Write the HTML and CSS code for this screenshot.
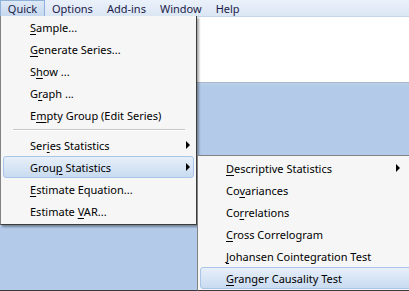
FILE: index.html
```html
<!DOCTYPE html>
<html>
<head>
<meta charset="utf-8">
<link rel="stylesheet" href="styles.css">
</head>
<body>
<div class="app">
  <div class="menubar">
    <span class="mb-item active">Quick</span>
    <span class="mb-item">Options</span>
    <span class="mb-item">Add-ins</span>
    <span class="mb-item">Window</span>
    <span class="mb-item">Help</span>
  </div>
  <div class="toolarea"></div>
  <div class="desktop"></div>
  <div class="statusline"></div>

  <div class="menu quick">
    <div class="mi"><u>S</u>ample...</div>
    <div class="mi"><u>G</u>enerate Series...</div>
    <div class="mi">S<u>h</u>ow ...</div>
    <div class="mi">G<u>r</u>aph ...</div>
    <div class="mi">E<u>m</u>pty Group (Edit Series)</div>
    <div class="sep"></div>
    <div class="mi sub">Ser<u>i</u>es Statistics<span class="arrow"></span></div>
    <div class="mi sub hl">Grou<u>p</u> Statistics<span class="arrow"></span></div>
    <div class="mi"><u>E</u>stimate Equation...</div>
    <div class="mi">Estimate <u>V</u>AR...</div>
  </div>

  <div class="menu group">
    <div class="mi sub"><u>D</u>escriptive Statistics<span class="arrow"></span></div>
    <div class="mi">Co<u>v</u>ariances</div>
    <div class="mi">Co<u>r</u>relations</div>
    <div class="mi"><u>C</u>ross Correlogram</div>
    <div class="mi"><u>J</u>ohansen Cointegration Test</div>
    <div class="mi hl"><u>G</u>ranger Causality Test</div>
  </div>
</div>
</body>
</html>
```

FILE: styles.css
```css
* { box-sizing: border-box; }
html, body {
  margin: 0;
  padding: 0;
  width: 409px;
  height: 291px;
  overflow: hidden;
}
body {
  font-family: "Noto Sans", "Open Sans", sans-serif;
  font-size: 11px;
  color: #000;
  background: #b3cbe9;
}
.app {
  position: relative;
  width: 409px;
  height: 291px;
  display: flex;
  flex-direction: column;
}
.menubar {
  height: 17px;
  display: flex;
  align-items: stretch;
  background: linear-gradient(#eaf1fa, #dbe6f4);
  border-bottom: 1px solid #c5d5ea;
  color: #1b1b48;
  font-size: 11px;
  line-height: 15px;
}
.mb-item {
  padding: 0 6px;
  border: 1px solid transparent;
}
.mb-item.active {
  background: linear-gradient(#dfe9f6, #c6d8ef);
  border-color: #8fb0d8;
  border-bottom: none;
  width: 45px;
  padding: 0;
  margin-right: 0;
  text-align: center;
}
.toolarea {
  height: 66px;
  background: #fff;
  border-bottom: 1px solid #a9b8cb;
}
.desktop {
  flex: 1;
  background: linear-gradient(#bccfe7 0, #b3cbe9 4px, #b3cbe9);
}
.statusline {
  height: 1px;
  background: #3a3a3a;
}
.menu {
  position: absolute;
  background: #f6f6f6;
  border: 1px solid #838383;
  border-right-color: #3c3c3c;
  border-bottom-color: #3c3c3c;
  box-shadow: 2px 2px 2px rgba(0,0,0,0.35);
  padding: 0 2px;
}
.quick {
  left: 0;
  top: 16px;
  width: 197px;
  height: 209px;
  border-top: none;
}
.group {
  left: 197px;
  top: 155px;
  width: 222px;
  height: 136px;
  padding-top: 1px;
}
.mi {
  position: relative;
  height: 22px;
  line-height: 21px;
  padding-left: 26px;
  white-space: nowrap;
  border: 1px solid transparent;
  border-radius: 3px;
}
.group .mi { padding-left: 25px; }
.mi u { text-underline-offset: 2px; }
.mi.hl {
  background: linear-gradient(#e7eff9, #c9dbf1);
  border-color: #a9c6ea;
}
.sep {
  height: 8px;
  margin: 0 9px 0 10px;
  display: flex;
  align-items: center;
}
.sep::before {
  content: "";
  display: block;
  width: 100%;
  height: 1px;
  background: #c8c8c8;
  border-bottom: 1px solid #fff;
}
.arrow {
  position: absolute;
  right: 3px;
  top: 6px;
  width: 0;
  height: 0;
  border-left: 4px solid #000;
  border-top: 4px solid transparent;
  border-bottom: 4px solid transparent;
}
.group .arrow { right: 15px; }
```
